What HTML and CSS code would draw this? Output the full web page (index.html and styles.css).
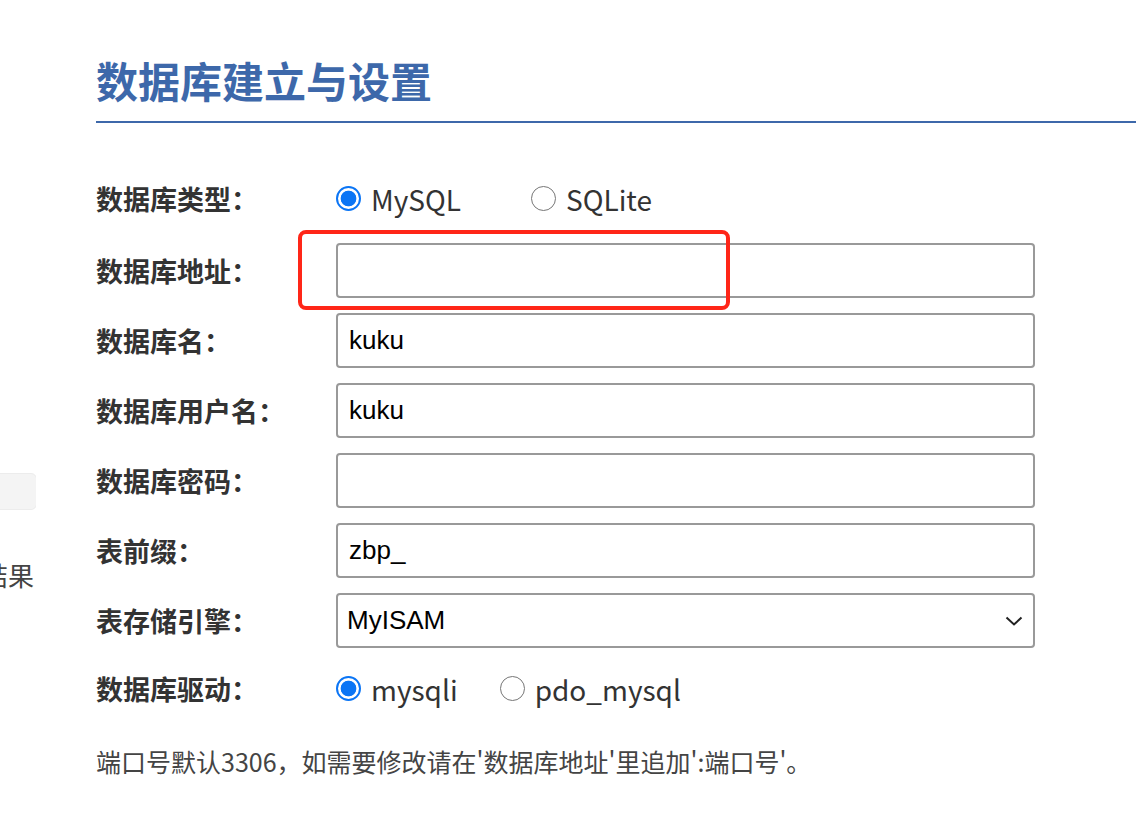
FILE: index.html
```html
<!DOCTYPE html>
<html lang="zh-CN">
<head>
<meta charset="utf-8">
<link rel="stylesheet" href="styles.css">
</head>
<body>
<div class="page">
  <aside class="side">
    <div class="side-box"></div>
    <div class="side-text">结果</div>
  </aside>
  <main class="main">
    <h1 class="title">数据库建立与设置</h1>
    <form class="form">
      <div class="row row-first">
        <label class="label">数据库类型：</label>
        <div class="radios">
          <label class="radio"><input type="radio" name="t" checked><span>MySQL</span></label>
          <label class="radio gap-l"><input type="radio" name="t"><span>SQLite</span></label>
        </div>
      </div>
      <div class="row">
        <label class="label">数据库地址：</label>
        <input class="field" type="text" value="">
        <div class="mark"></div>
      </div>
      <div class="row">
        <label class="label">数据库名：</label>
        <input class="field" type="text" value="kuku">
      </div>
      <div class="row">
        <label class="label">数据库用户名：</label>
        <input class="field" type="text" value="kuku">
      </div>
      <div class="row">
        <label class="label">数据库密码：</label>
        <input class="field" type="text" value="">
      </div>
      <div class="row">
        <label class="label">表前缀：</label>
        <input class="field" type="text" value="zbp_">
      </div>
      <div class="row">
        <label class="label">表存储引擎：</label>
        <div class="select">
          <span>MyISAM</span>
          <svg class="chev" width="18" height="10" viewBox="0 0 18 10"><path d="M1.5 1.5 L9 8.5 L16.5 1.5" fill="none" stroke="#222" stroke-width="2"/></svg>
        </div>
      </div>
      <div class="row row-last">
        <label class="label">数据库驱动：</label>
        <div class="radios">
          <label class="radio"><input type="radio" name="d" checked><span>mysqli</span></label>
          <label class="radio gap-s"><input type="radio" name="d"><span>pdo_mysql</span></label>
        </div>
      </div>
    </form>
    <p class="note">端口号默认3306，如需要修改请在'数据库地址'里追加':端口号'。</p>
  </main>
</div>
</body>
</html>
```

FILE: styles.css
```css
html, body {
  margin: 0;
  padding: 0;
  background: #fff;
}
body {
  font-family: "Noto Sans CJK SC", "Noto Sans", sans-serif;
  color: #333;
}
.page {
  display: flex;
  width: 1136px;
  height: 836px;
  overflow: hidden;
}
.side {
  width: 36px;
  flex: none;
  overflow: hidden;
  position: relative;
}
.side-box {
  margin-top: 473px;
  margin-left: -40px;
  width: 75px;
  height: 35px;
  background: #f4f4f4;
  border: 1px solid #ececec;
  border-radius: 6px;
}
.side-text {
  margin-top: 47px;
  margin-left: -20px;
  width: 54px;
  text-align: right;
  font-size: 26px;
  line-height: 36px;
  color: #444;
  white-space: nowrap;
}
.main {
  margin-left: 60px;
  flex: 1;
}
.title {
  margin: 52px 0 0;
  font-size: 42px;
  line-height: 56px;
  font-weight: 700;
  color: #3d68aa;
  padding-bottom: 13px;
  border-bottom: 2px solid #3d68aa;
}
.form {
  margin-top: 48px;
  display: flex;
  flex-direction: column;
  gap: 15px;
}
.row {
  display: flex;
  align-items: center;
  height: 55px;
  position: relative;
}
.row-first {
  margin-bottom: 2px;
}
.row-last {
  margin-top: -2px;
}
.label {
  width: 240px;
  flex: none;
  font-size: 27px;
  font-weight: 700;
  color: #333;
  white-space: nowrap;
}
.field, .select {
  box-sizing: border-box;
  width: 699px;
  height: 55px;
  border: 2px solid #999;
  border-radius: 4px;
  padding: 0 11px;
  font-family: "Liberation Sans", Arial, sans-serif;
  font-size: 26px;
  color: #000;
  background: #fff;
  outline: none;
}
.select {
  display: flex;
  align-items: center;
  justify-content: space-between;
  padding: 0 10px 0 9px;
}
.radios {
  display: flex;
  align-items: center;
}
.radio {
  display: flex;
  align-items: center;
  font-size: 28px;
  color: #333;
}
.radio span {
  margin-left: 10px;
}
.gap-l { margin-left: 70px; }
.gap-s { margin-left: 42px; }
.radio input {
  appearance: none;
  -webkit-appearance: none;
  margin: 0;
  width: 25px;
  height: 25px;
  border-radius: 50%;
  border: 1.5px solid #767676;
  box-sizing: border-box;
  background: #fff;
}
.radio input:checked {
  border: 2px solid #0b75f5;
  background: radial-gradient(circle, #0b75f5 0 7.5px, #fff 8.2px);
}
.mark {
  position: absolute;
  left: 202px;
  top: -13px;
  width: 424px;
  height: 72px;
  border: 4px solid #ff2618;
  border-radius: 8px;
  pointer-events: none;
}
.note {
  margin: 29px 0 0;
  font-size: 25px;
  line-height: 32px;
  color: #444;
  white-space: nowrap;
}
```
